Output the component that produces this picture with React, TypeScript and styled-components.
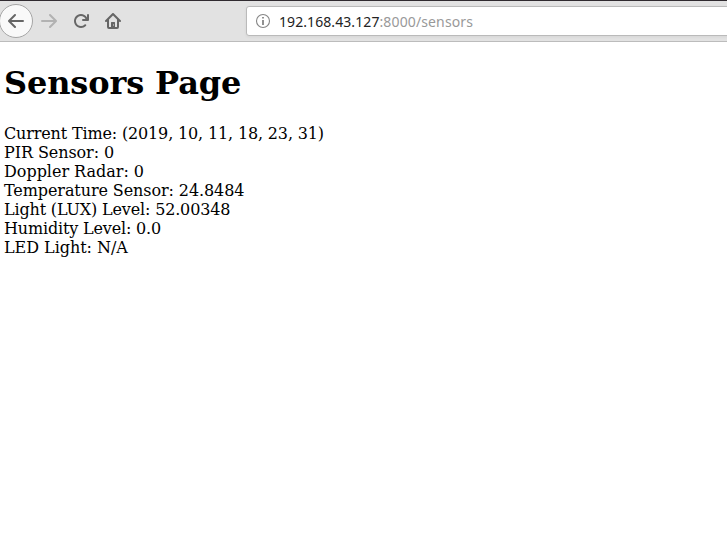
import React from "react";
import styled, { createGlobalStyle } from "styled-components";

const Global = createGlobalStyle`
  * { box-sizing: border-box; }
  body { margin: 0; background: #fff; overflow: hidden; }
`;
const Browser = styled.div`
  width: 727px; height: 541px; overflow: hidden; background: #fff;
`;
const Toolbar = styled.header`
  display: flex; height: 42px; background: #e2e2e2;
  border-top: 1px solid #302b30; border-bottom: 1px solid #bcbcbc;
`;
const NavButtons = styled.nav`
  display: flex; align-items: center; width: 246px; flex: none;
`;
const NavButton = styled.button<{ $round?: boolean }>`
  display: flex; align-items: center; justify-content: center; flex: none;
  width: ${p => (p.$round ? 34 : 32)}px; height: ${p => (p.$round ? 34 : 32)}px;
  margin-left: ${p => (p.$round ? -1 : 0)}px;
  padding: 0; border-radius: ${p => (p.$round ? "50%" : "2px")};
  border: ${p => (p.$round ? "1px solid #a5a5a5" : "0")};
  background: ${p => (p.$round ? "#f9f9f9" : "transparent")};
`;
const Icon = styled.svg<{ $muted?: boolean }>`
  display: block; width: 16px; height: 16px;
  fill: ${p => (p.$muted ? "#b2b2b2" : "#666")};
`;
const AddressBar = styled.div`
  display: flex; align-items: center; flex: none; width: 500px; height: 30px;
  margin-top: 5px; padding-left: 8px; border: 1px solid #bababa; border-radius: 3px;
  background: #fff; box-shadow: 0 1px 3px rgba(0, 0, 0, 0.06);
  font: 14px/20px "Noto Sans", sans-serif; color: #999;
`;
const Host = styled.span`
  margin: 2px 0 0 8px; color: #222; letter-spacing: 0.08px;
`;
const Path = styled.span` margin-top: 2px; letter-spacing: 0.13px; `;
const Page = styled.main`
  padding: 22px 4px; font: 16px/19px "DejaVu Serif", serif; color: #000;
`;
const Title = styled.h1`
  margin: 0 0 22px; font-size: 32px; line-height: 38px; letter-spacing: -0.13px;
`;
const Reading = styled.div<{ $tracking: number }>`
  height: 19px; white-space: nowrap; letter-spacing: ${p => p.$tracking}px;
`;

const readings = [
  { text: "Current Time: (2019, 10, 11, 18, 23, 31)", tracking: -0.15 },
  { text: "PIR Sensor: 0", tracking: -0.08 },
  { text: "Doppler Radar: 0", tracking: -0.02 },
  { text: "Temperature Sensor: 24.8484", tracking: -0.09 },
  { text: "Light (LUX) Level: 52.00348", tracking: -0.16 },
  { text: "Humidity Level: 0.0", tracking: -0.16 },
  { text: "LED Light: N/A", tracking: -0.04 },
];

export default function App() {
  return (
    <Browser>
      <Global />
      <Toolbar>
        <NavButtons>
          <NavButton $round aria-label="Back">
            <Icon viewBox="0 0 16 16"><path d="M15 7H3.414l4.293-4.293a1 1 0 0 0-1.414-1.414l-6 6a1 1 0 0 0 0 1.414l6 6a1 1 0 0 0 1.414-1.414L3.414 9H15a1 1 0 0 0 0-2z" /></Icon>
          </NavButton>
          <NavButton aria-label="Forward">
            <Icon $muted viewBox="0 0 16 16"><path d="M1 7h11.586L8.293 2.707a1 1 0 0 1 1.414-1.414l6 6a1 1 0 0 1 0 1.414l-6 6a1 1 0 0 1-1.414-1.414L12.586 9H1a1 1 0 0 1 0-2z" /></Icon>
          </NavButton>
          <NavButton aria-label="Reload">
            <Icon viewBox="0 0 16 16"><path d="M15 1a1 1 0 0 0-1 1v2.418A6.995 6.995 0 1 0 8 15a6.954 6.954 0 0 0 4.95-2.05 1 1 0 0 0-1.414-1.414A5.019 5.019 0 1 1 12.549 6H10a1 1 0 0 0 0 2h5a1 1 0 0 0 1-1V2a1 1 0 0 0-1-1z" /></Icon>
          </NavButton>
          <NavButton aria-label="Home">
            <Icon viewBox="0 0 16 16"><path fillRule="evenodd" d="M15.707 7.293l-7-7a1 1 0 0 0-1.414 0l-7 7a1 1 0 0 0 1.414 1.414L2 8.414V14a2 2 0 0 0 2 2h8a2 2 0 0 0 2-2V8.414l.293.293a1 1 0 0 0 1.414-1.414zM12 14h-2V9.5a.5.5 0 0 0-.5-.5h-3a.5.5 0 0 0-.5.5V14H4V6.414l4-4 4 4zM8 11.5h1v1H8z" /></Icon>
          </NavButton>
        </NavButtons>
        <AddressBar>
          <svg width="16" height="16" viewBox="0 0 16 16" fill="none" stroke="#858585"><circle cx="8" cy="8" r="6.5" strokeWidth="1.1"/><path d="M8 7v5M8 4v1.5" strokeWidth="1.8"/></svg>
          <Host>192.168.43.127</Host><Path>:8000/sensors</Path>
        </AddressBar>
      </Toolbar>
      <Page>
        <Title>Sensors Page</Title>
        {readings.map(({ text, tracking }) => (
          <Reading key={text} $tracking={tracking}>{text}</Reading>
        ))}
      </Page>
    </Browser>
  );
}
